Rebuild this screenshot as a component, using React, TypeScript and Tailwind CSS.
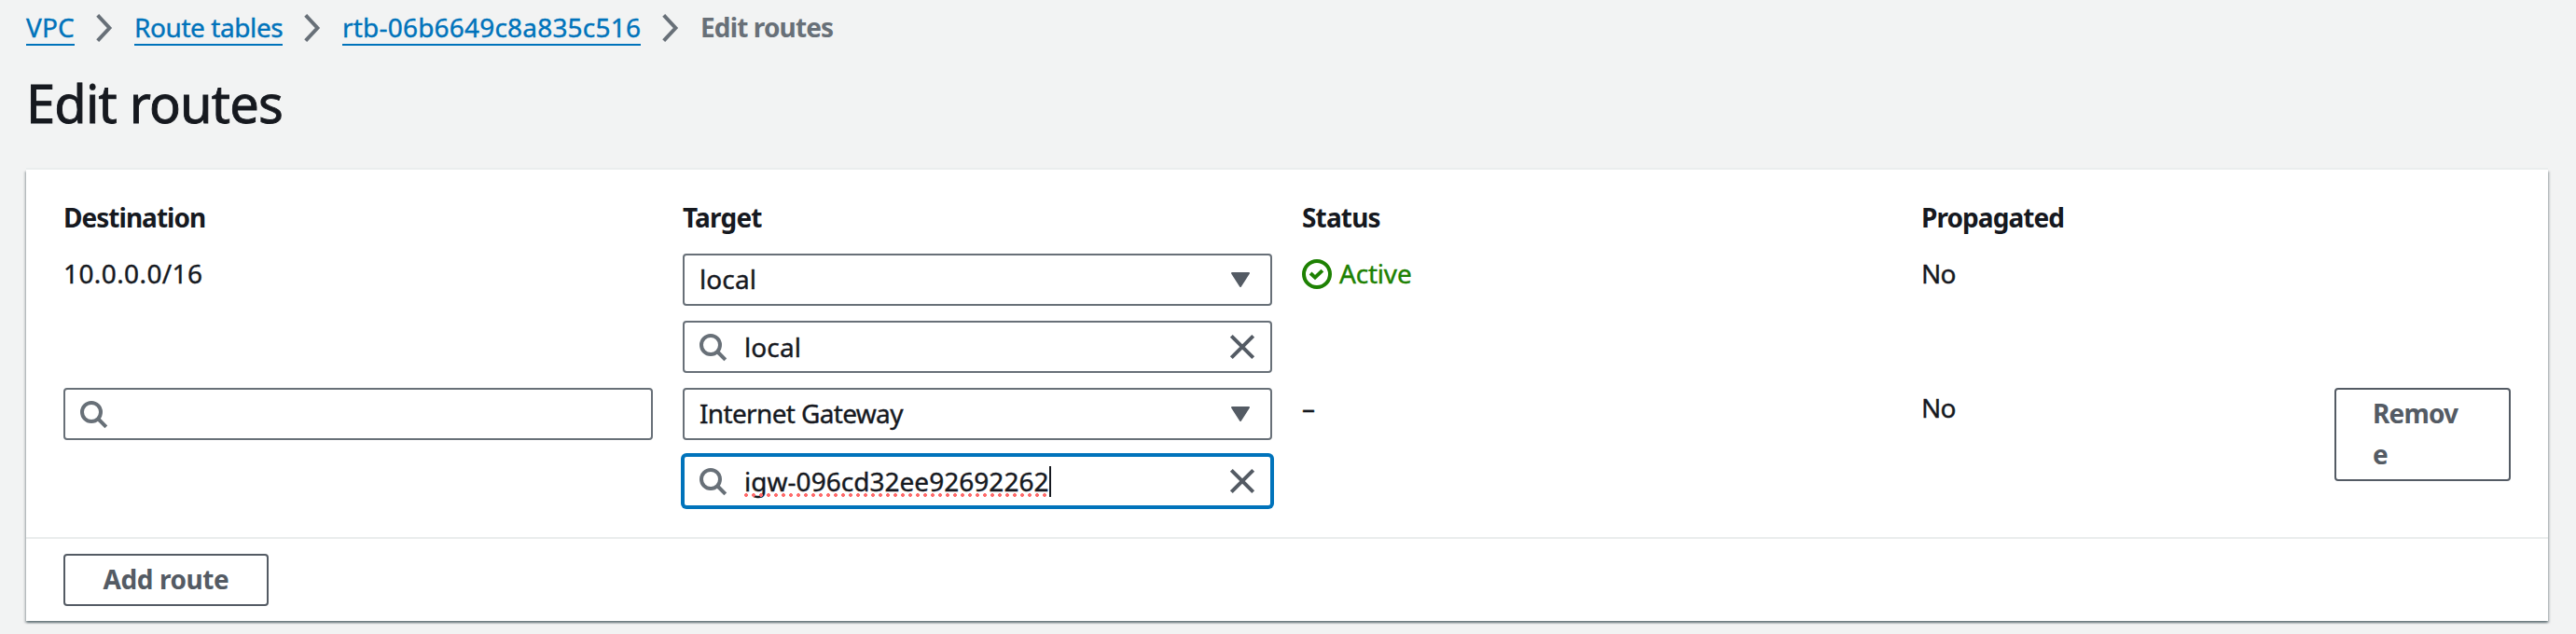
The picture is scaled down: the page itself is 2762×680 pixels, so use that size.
import type { ReactNode } from "react";

const BASE = "font-['Noto_Sans','Open_Sans',sans-serif] [-webkit-text-stroke:0.4px]";
const BOLD = "font-bold [-webkit-text-stroke:0px]";

function Chevron() {
  return (
    <svg className="mx-4 mt-px h-8 w-8 shrink-0" viewBox="0 0 32 32" fill="none" stroke="#687078" strokeWidth="4">
      <path d="M8.7 2.4 21.4 16 8.7 29.6" />
    </svg>
  );
}

function SearchIcon() {
  return (
    <svg className="h-8 w-8 shrink-0" viewBox="0 0 32 32" fill="none" stroke="#687078" strokeWidth="4">
      <circle cx="14" cy="14" r="10" />
      <path d="M21 21l8.8 8.8" />
    </svg>
  );
}

function CloseIcon() {
  return (
    <svg className="h-8 w-8 shrink-0" viewBox="0 0 32 32" fill="none" stroke="#545b64" strokeWidth="4">
      <path d="M4.3 4.3 27.7 27.7M27.7 4.3 4.3 27.7" />
    </svg>
  );
}

function CaretIcon() {
  return (
    <svg className="h-8 w-8 shrink-0" viewBox="0 0 32 32" fill="#545b64" stroke="#545b64" strokeWidth="2" strokeLinejoin="round">
      <path d="M7 9H25L16 23Z" />
    </svg>
  );
}

function CheckIcon() {
  return (
    <svg className="h-8 w-8 shrink-0" viewBox="0 0 32 32" fill="none" stroke="#1d8102" strokeWidth="4">
      <circle cx="16" cy="16" r="14" />
      <path d="M9.1 15 14 19.6 21.9 12.1" />
    </svg>
  );
}

function Crumb({ children, width }: { children: ReactNode; width: string }) {
  return (
    <a href="#" className={`block h-9 border-b-2 border-[#0073bb] leading-8 whitespace-nowrap text-[#0073bb] ${width}`}>
      {children}
    </a>
  );
}

function Select({ children }: { children: ReactNode }) {
  return (
    <div className="flex h-14 w-[632px] items-start justify-between rounded-[4px] border-2 border-[#687078] bg-white pr-4 pl-4 leading-[50px]">
      {children}
      <span className="flex h-[52px] items-center">
        <CaretIcon />
      </span>
    </div>
  );
}

function SearchField({ children, clearable, focused }: { children?: ReactNode; clearable?: boolean; focused?: boolean }) {
  return (
    <div
      className={`flex h-14 w-[632px] items-center rounded-[4px] border-2 bg-white pr-3.5 pl-3.5 leading-[52px] ${
        focused ? "border-[#0073bb] ring-2 ring-[#0073bb]" : "border-[#687078]"
      }`}
    >
      <SearchIcon />
      <span className="ml-[18px] flex-1">{children}</span>
      {clearable && <CloseIcon />}
    </div>
  );
}

export default function App() {
  return (
    <div className={`h-[680px] w-[2762px] overflow-hidden bg-[#f2f3f3] px-7 pt-[13px] text-[28px] text-[#16191f] ${BASE}`}>
      <nav className="flex h-9 items-start pr-7">
        <Crumb width="w-[52px]"><span className="tracking-[0.1px]">VPC</span></Crumb>
        <Chevron />
        <Crumb width="w-[159px]"><span className="tracking-[-0.42px]">Route tables</span></Crumb>
        <Chevron />
        <Crumb width="w-[320px]"><span className="tracking-[0.2px]">rtb-06b6649c8a835c516</span></Crumb>
        <Chevron />
        <span className={`leading-8 tracking-[-0.87px] text-[#687078] ${BOLD}`}>Edit routes</span>
      </nav>
      <h1 className="mt-[29px] text-[56px] leading-16 tracking-[-0.82px] [-webkit-text-stroke:0.9px]">Edit routes</h1>

      <main className="mt-10 h-[484px] w-[2704px] bg-white shadow-[0_2px_2px_0_rgba(0,28,36,0.4),2px_2px_2px_0_rgba(0,28,36,0.15),-2px_2px_2px_0_rgba(0,28,36,0.15),0_-2px_0_0_#eaeded]">
        <div className="h-[394px] px-10 pt-[30px] leading-[42px]">
          <div className={`grid h-[60px] grid-cols-[664px_664px_664px_1fr] ${BOLD}`}>
            <span className="tracking-[-0.98px]">Destination</span>
            <span className="tracking-[-0.81px]">Target</span>
            <span className="tracking-[-0.84px]">Status</span>
            <span className="tracking-[-0.92px]">Propagated</span>
          </div>
          <div className="grid h-36 grid-cols-[664px_664px_664px_443px_189px]">
            <span className="tracking-[0.4px]">10.0.0.0/16</span>
            <div className="flex flex-col gap-4">
              <Select><span className="tracking-[0.1px]">local</span></Select>
              <SearchField clearable><span className="tracking-[0.1px]">local</span></SearchField>
            </div>
            <div className="flex items-start text-[#1d8102]">
              <span className="mt-1.5 mr-2"><CheckIcon /></span>
              <span className="tracking-[-0.2px]">Active</span>
            </div>
            <span className="tracking-[-0.9px]">No</span>
          </div>
          <div className="grid h-36 grid-cols-[664px_664px_664px_443px_189px]">
            <SearchField />
            <div className="flex flex-col gap-4">
              <Select><span className="tracking-[-0.65px]">Internet Gateway</span></Select>
              <SearchField clearable focused>
                <span className="relative inline-block h-[52px]">
                  <span className="tracking-[0.03px]">igw-096cd32ee92692262</span>
                  <span className="absolute top-[39px] left-0 h-1 w-[327px] bg-[radial-gradient(circle_at_2px_2px,#ff6b6b_1.7px,transparent_2.2px)] bg-[length:8px_4px]" />
                  <span className="absolute top-[10px] right-[-2px] h-[33px] w-0.5 bg-[#16191f]" />
                </span>
              </SearchField>
            </div>
            <span>–</span>
            <span className="tracking-[-0.9px]">No</span>
            <button className={`h-[100px] rounded-[4px] border-2 border-[#545b64] pr-10 pb-0.5 pl-[39px] text-left leading-11 tracking-[-0.83px] text-[#545b64] ${BOLD}`}>
              Remov<br />e
            </button>
          </div>
        </div>
        <div className="h-[90px] border-t-2 border-[#eaeded] px-10 pt-4">
          <button className={`flex h-14 w-[220px] items-start justify-center rounded-[4px] border-2 border-[#545b64] leading-[50px] tracking-[-0.42px] text-[#545b64] ${BOLD}`}>
            Add route
          </button>
        </div>
      </main>
    </div>
  );
}
